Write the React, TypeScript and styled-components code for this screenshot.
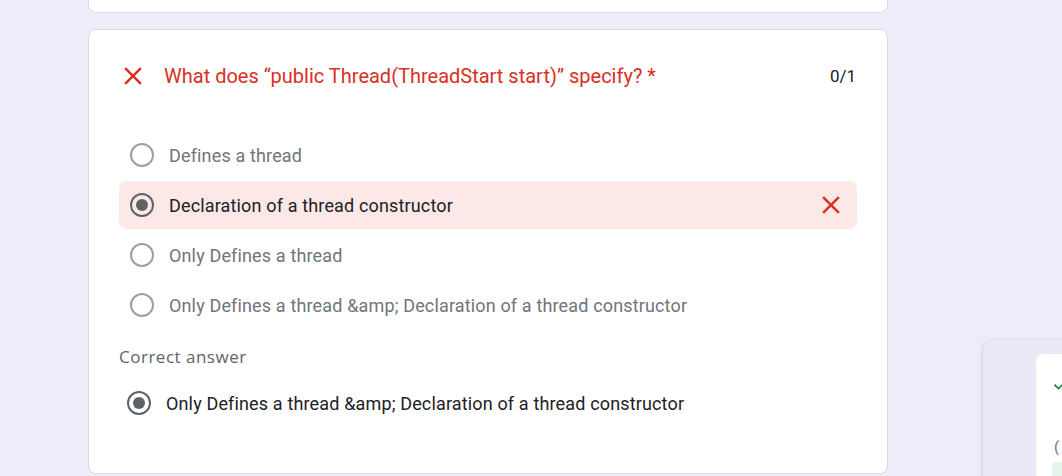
import React from 'react';
import styled, { createGlobalStyle } from 'styled-components';

const GlobalStyle = createGlobalStyle`
  html, body {
    margin: 0;
    padding: 0;
    background: #efebf8;
    font-family: Roboto, "Noto Sans", Arial, sans-serif;
    overflow: hidden;
  }
`;

const Page = styled.div`
  position: relative;
  width: 1062px;
  height: 476px;
  overflow: hidden;
`;

const Column = styled.div`
  display: flex;
  flex-direction: column;
  gap: 16px;
  width: 800px;
  margin-left: 88px;
  margin-top: -49px;
`;

const Card = styled.div`
  box-sizing: border-box;
  background: #fff;
  border: 1px solid #dadce0;
  border-radius: 8px;
  padding: 24px 30px 46px 30px;
`;

const PrevCard = styled(Card)`
  height: 62px;
  padding: 0;
`;

const Header = styled.div`
  display: flex;
  align-items: center;
  height: 44px;
  margin-bottom: 33px;
`;

const HeaderIcon = styled.div`
  display: flex;
  margin-left: -1px;
  margin-right: 16px;
`;

const Question = styled.div`
  flex: 1;
  color: #d93025;
  font-size: 20px;
`;

const Score = styled.div`
  color: #202124;
  font-size: 17px;
  margin-right: 1px;
`;

const Options = styled.div`
  display: flex;
  flex-direction: column;
  gap: 2px;
`;

const Option = styled.div<{ $wrong?: boolean }>`
  display: flex;
  align-items: center;
  height: 48px;
  padding: 0 11px 0 11px;
  border-radius: 8px;
  background: ${({ $wrong }) => ($wrong ? '#fce8e6' : 'transparent')};
`;

const Radio = styled.span<{ $checked?: boolean }>`
  box-sizing: border-box;
  display: flex;
  align-items: center;
  justify-content: center;
  width: 24px;
  height: 24px;
  border-radius: 50%;
  border: 2px solid ${({ $checked }) => ($checked ? '#5f6368' : '#9aa0a6')};
  margin-right: 15px;
  flex-shrink: 0;

  &::after {
    content: '';
    display: ${({ $checked }) => ($checked ? 'block' : 'none')};
    width: 12px;
    height: 12px;
    border-radius: 50%;
    background: #5f6368;
  }
`;

const OptionText = styled.span<{ $dark?: boolean }>`
  flex: 1;
  font-size: 18px;
  letter-spacing: 0.15px;
  color: ${({ $dark }) => ($dark ? '#202124' : '#70757a')};
`;

const CorrectLabel = styled.div`
  margin-top: 16px;
  color: #5f6368;
  font-family: "Open Sans", Roboto, sans-serif;
  font-size: 17px;
  font-weight: 500;
  letter-spacing: 0.5px;
  height: 24px;
  line-height: 24px;
`;

const CorrectRow = styled.div`
  display: flex;
  align-items: center;
  height: 48px;
  margin-top: 10px;
  padding-left: 8px;
`;

const SidePanel = styled.div`
  position: absolute;
  left: 983px;
  top: 340px;
  width: 200px;
  height: 200px;
  background: #ece8f5;
  border-radius: 12px;
  box-shadow: 0 1px 4px rgba(60, 64, 67, 0.25);
  padding: 14px 0 0 53px;
  box-sizing: border-box;
`;

const SideCard = styled.div`
  background: #fff;
  border-radius: 8px;
  height: 200px;
  padding: 20px 0 0 15px;
  box-sizing: border-box;
  color: #70757a;
  font-size: 15px;
`;

const SideParen = styled.div`
  margin-top: 40px;
  padding-left: 3px;
`;

const SideTint = styled.div`
  margin-top: 6px;
  height: 40px;
  background: #e6f4ea;
  border-radius: 4px 0 0 0;
  margin-left: 1px;
`;

const Cross = ({ size = 22 }: { size?: number }) => (
  <svg width={size} height={size} viewBox="0 0 24 24">
    <path
      d="M19 6.41 17.59 5 12 10.59 6.41 5 5 6.41 10.59 12 5 17.59 6.41 19 12 13.41 17.59 19 19 17.59 13.41 12z"
      fill="#d93025"
    />
  </svg>
);

const options = [
  'Defines a thread',
  'Declaration of a thread constructor',
  'Only Defines a thread',
  'Only Defines a thread &amp; Declaration of a thread constructor',
];

export default function App() {
  return (
    <Page>
      <GlobalStyle />
      <Column>
        <PrevCard />
        <Card>
          <Header>
            <HeaderIcon>
              <Cross size={30} />
            </HeaderIcon>
            <Question>What does “public Thread(ThreadStart start)” specify? *</Question>
            <Score>0/1</Score>
          </Header>
          <Options>
            {options.map((o, i) => (
              <Option key={o} $wrong={i === 1}>
                <Radio $checked={i === 1} />
                <OptionText $dark={i === 1}>{o}</OptionText>
                {i === 1 && <Cross size={30} />}
              </Option>
            ))}
          </Options>
          <CorrectLabel>Correct answer</CorrectLabel>
          <CorrectRow>
            <Radio $checked />
            <OptionText $dark>{options[3]}</OptionText>
          </CorrectRow>
        </Card>
      </Column>
      <SidePanel>
        <SideCard>
          <svg width="20" height="20" viewBox="0 0 24 24">
            <path d="M9 16.17 4.83 12l-1.42 1.41L9 19 21 7l-1.41-1.41z" fill="#188038" />
          </svg>
          <SideParen>(</SideParen>
          <SideTint />
        </SideCard>
      </SidePanel>
    </Page>
  );
}
